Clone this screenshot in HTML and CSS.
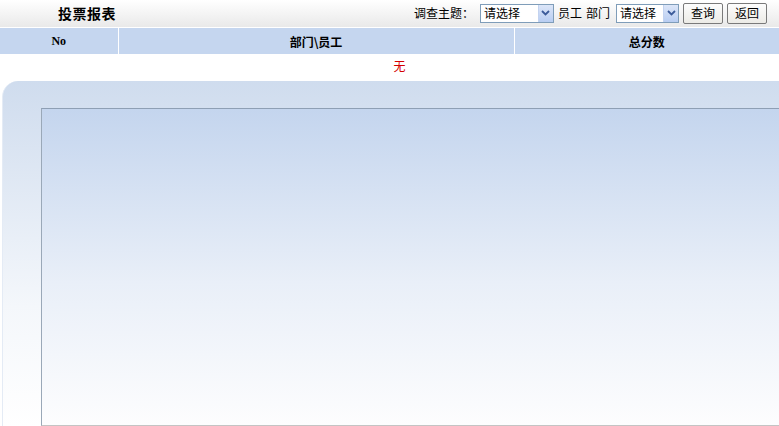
FILE: index.html
```html
<!DOCTYPE html>
<html>

<head>
  <meta charset="utf-8">
  <link rel="stylesheet" href="styles.css">
</head>

<body>

  <div class="topbar">
    <h1 class="title">投票报表</h1>
    <form class="filters">
      <label class="lbl lbl-topic">调查主题：</label>
      <div class="sel sel-wide">
        <span>请选择</span>
        <i class="arrow"><svg width="9" height="6" viewBox="0 0 9 6"><path d="M1 1 L4.5 4.5 L8 1" fill="none" stroke="#3b5b9a" stroke-width="1.8"/></svg></i>
      </div>
      <label class="lbl">员工</label>
      <label class="lbl lbl-dept">部门</label>
      <div class="sel">
        <span>请选择</span>
        <i class="arrow"><svg width="9" height="6" viewBox="0 0 9 6"><path d="M1 1 L4.5 4.5 L8 1" fill="none" stroke="#3b5b9a" stroke-width="1.8"/></svg></i>
      </div>
      <button type="button" class="btn">查询</button>
      <button type="button" class="btn">返回</button>
    </form>
  </div>

  <table class="report">
    <tr>
      <th class="col-no">No</th>
      <th class="col-name">部门\员工</th>
      <th>总分数</th>
    </tr>
    <tr>
      <td colspan="3" class="empty">无</td>
    </tr>
  </table>

  <div class="panel">
    <div class="chart"></div>
  </div>

</body>

</html>
```

FILE: styles.css
```css
body {
  margin: 0;
  font-family: "Noto Sans CJK SC", "DejaVu Sans", sans-serif;
  font-size: 12px;
  color: #000;
  background: #fff;
  overflow: hidden;
}

* {
  box-sizing: border-box;
}

/* Top bar with title and filters */
.topbar {
  height: 27px;
  display: flex;
  align-items: center;
  justify-content: space-between;
  background: linear-gradient(#ffffff, #e9e9e9);
}

.title {
  margin: 0 0 2px 58px;
  font-size: 14px;
  font-weight: bold;
  letter-spacing: 0.5px;
}

.filters {
  display: flex;
  align-items: center;
  margin: 0 12px 1px 0;
}

.lbl {
  margin-right: 4px;
  line-height: 14px;
}

.lbl-topic {
  width: 60px;
  margin-right: 6px;
}

.lbl-dept {
  margin-right: 6px;
}

/* Fake select boxes */
.sel {
  width: 63px;
  height: 19px;
  border: 1px solid #7f9db9;
  background: #fff;
  display: flex;
  align-items: center;
  justify-content: space-between;
  padding-left: 3px;
  margin-right: 4px;
}

.sel-wide {
  width: 74px;
}

.sel span {
  line-height: 14px;
}

.arrow {
  width: 15px;
  height: 17px;
  background: linear-gradient(#dce6f8, #b8cdf2);
  border-left: 1px solid #c3d3f0;
  display: flex;
  align-items: center;
  justify-content: center;
}

.btn {
  height: 21px;
  width: 40px;
  padding: 0;
  margin-right: 4px;
  font-family: inherit;
  font-size: 12px;
  background: linear-gradient(#fdfdfd, #ecebe6);
  border: 1px solid #7a7a7a;
  border-radius: 2px;
  line-height: 14px;
}

.btn:last-child {
  margin-right: 0;
}

/* Result table */
.report {
  width: 100%;
  border-collapse: collapse;
  margin-top: 1px;
}

.report th {
  height: 26px;
  background: #c5d6ef;
  font-weight: bold;
  font-size: 12px;
  border-left: 1px solid #fff;
  padding: 0;
}

.report th:first-child {
  border-left: none;
}

.col-no {
  width: 118px;
  font-family: "Liberation Serif", serif;
}

.col-name {
  width: 396px;
}

.empty {
  height: 24px;
  text-align: center;
  color: #d40000;
  padding: 0 0 2px 20px;
}

/* Chart area */
.panel {
  margin: 3px 0 0 2px;
  height: 346px;
  padding: 27px 0 0 38px;
  border-top-left-radius: 16px;
  border-left: 1px solid #e4ebf5;
  background: linear-gradient(#cfdcee, #f4f7fb 65%, #ffffff);
}

.chart {
  height: 318px;
  border: 1px solid #8e9fb4;
  border-right: none;
  border-bottom-color: #c4c4c4;
  border-left-color: #9aa8b8;
  background: linear-gradient(#c4d5ee, #e9eff8 55%, #fdfdfe);
}
```
